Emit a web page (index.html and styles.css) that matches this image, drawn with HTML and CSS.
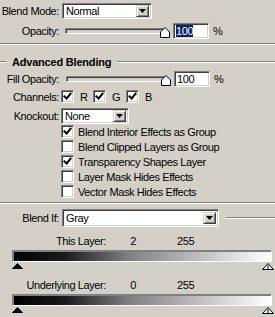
FILE: index.html
```html
<!DOCTYPE html>
<html lang="en">
<head>
    <meta charset="UTF-8">
    <title>Blending Options</title>
    <link rel="stylesheet" href="styles.css">
</head>
<body>

<div class="panel">
    <div class="row row-mode">
        <span class="lbl">Blend Mode:</span>
        <div class="select select-mode">
            <span class="select-text">Normal</span>
            <span class="drop"><svg width="7" height="4" viewBox="0 0 7 4"><polygon points="0,0 7,0 3.5,4" fill="#000"/></svg></span>
        </div>
    </div>

    <div class="row row-opacity">
        <span class="lbl">Opacity:</span>
        <div class="slider">
            <div class="track"></div>
            <svg class="thumb" width="10" height="11" viewBox="0 0 10 11"><polygon points="0.5,10.5 0.5,5 5,0.5 9.5,5 9.5,10.5" fill="#fff" stroke="#000"/></svg>
        </div>
        <div class="field"><span class="selected">100</span></div>
        <span class="unit">%</span>
    </div>

    <div class="sep"></div>

    <div class="group-title"><span>Advanced Blending</span></div>

    <div class="row row-fill">
        <span class="lbl">Fill Opacity:</span>
        <div class="slider">
            <div class="track"></div>
            <svg class="thumb" width="10" height="11" viewBox="0 0 10 11"><polygon points="0.5,10.5 0.5,5 5,0.5 9.5,5 9.5,10.5" fill="#fff" stroke="#000"/></svg>
        </div>
        <div class="field"><span>100</span></div>
        <span class="unit">%</span>
    </div>

    <div class="row row-channels">
        <span class="lbl">Channels:</span>
        <label class="chan chan-r"><span class="box checked"></span>R</label>
        <label class="chan chan-g"><span class="box checked"></span>G</label>
        <label class="chan"><span class="box checked"></span>B</label>
    </div>

    <div class="row row-knockout">
        <span class="lbl">Knockout:</span>
        <div class="select select-knockout">
            <span class="select-text">None</span>
            <span class="drop"><svg width="7" height="4" viewBox="0 0 7 4"><polygon points="0,0 7,0 3.5,4" fill="#000"/></svg></span>
        </div>
    </div>

    <div class="checks">
        <label class="check"><span class="box checked"></span>Blend Interior Effects as Group</label>
        <label class="check"><span class="box"></span>Blend Clipped Layers as Group</label>
        <label class="check"><span class="box checked"></span>Transparency Shapes Layer</label>
        <label class="check"><span class="box"></span>Layer Mask Hides Effects</label>
        <label class="check"><span class="box"></span>Vector Mask Hides Effects</label>
    </div>

    <div class="sep sep-low"></div>

    <div class="row row-blendif">
        <span class="lbl">Blend If:</span>
        <div class="select select-blendif">
            <span class="select-text">Gray</span>
            <span class="drop"><svg width="7" height="4" viewBox="0 0 7 4"><polygon points="0,0 7,0 3.5,4" fill="#000"/></svg></span>
        </div>
        <div class="tail-line"></div>
    </div>

    <div class="range">
        <div class="range-head">
            <span class="range-lbl">This Layer:</span>
            <span class="range-lo">2</span>
            <span class="range-hi">255</span>
        </div>
        <div class="ramp"></div>
        <div class="marks">
            <svg width="11" height="6" viewBox="0 0 11 6"><polygon points="0.5,5.5 5.5,0.5 10.5,5.5" fill="#000" stroke="#000"/></svg>
            <svg width="12" height="7" viewBox="0 0 12 7"><polygon points="0.5,6.5 6,0.5 11.5,6.5" fill="#fff" stroke="#000"/><line x1="6" y1="2" x2="6" y2="6" stroke="#000"/></svg>
        </div>
    </div>

    <div class="range range-under">
        <div class="range-head">
            <span class="range-lbl">Underlying Layer:</span>
            <span class="range-lo">0</span>
            <span class="range-hi">255</span>
        </div>
        <div class="ramp"></div>
        <div class="marks">
            <svg width="11" height="6" viewBox="0 0 11 6"><polygon points="0.5,5.5 5.5,0.5 10.5,5.5" fill="#000" stroke="#000"/></svg>
            <svg width="12" height="7" viewBox="0 0 12 7"><polygon points="0.5,6.5 6,0.5 11.5,6.5" fill="#fff" stroke="#000"/><line x1="6" y1="2" x2="6" y2="6" stroke="#000"/></svg>
        </div>
    </div>
</div>

</body>
</html>
```

FILE: styles.css
```css
body {
    margin: 0;
    padding: 0;
    background-color: #d4d0c8;
    font-family: 'Liberation Sans', Arial, sans-serif;
    font-size: 11px;
    letter-spacing: -0.4px;
    color: #000;
    width: 275px;
    height: 317px;
    overflow: hidden;
}

.panel {
    padding-top: 3px;
}

.row {
    display: flex;
    align-items: center;
}

.lbl {
    width: 59px;
    margin-right: 3px;
    text-align: right;
    white-space: nowrap;
}

/* sunken classic border */
.select,
.field,
.box,
.track {
    box-sizing: border-box;
    background-color: #fff;
    border: 1px solid;
    border-color: #808080 #fff #fff #808080;
    box-shadow: inset 1px 1px 0 #404040, inset -1px -1px 0 #d4d0c8;
}

.select {
    display: flex;
    align-items: center;
    justify-content: space-between;
    height: 16px;
    padding: 2px 2px 2px 3px;
}

.select-text {
    line-height: 12px;
}

.drop {
    box-sizing: border-box;
    width: 13px;
    height: 12px;
    background-color: #d4d0c8;
    border: 1px solid;
    border-color: #d4d0c8 #404040 #404040 #d4d0c8;
    box-shadow: inset 1px 1px 0 #fff, inset -1px -1px 0 #808080;
    display: flex;
    align-items: center;
    justify-content: center;
}

.row-mode {
    height: 16px;
}

.select-mode {
    width: 90px;
}

.row-opacity {
    margin-top: 4px;
    height: 16px;
}

.slider {
    position: relative;
    width: 105px;
    height: 16px;
    margin-left: 3px;
}

.track {
    position: absolute;
    left: 0;
    top: 5px;
    width: 100px;
    height: 6px;
    background-color: #d4d0c8;
}

.thumb {
    position: absolute;
    left: 95px;
    top: 4px;
}

.field {
    width: 36px;
    height: 16px;
    margin-left: 3px;
    padding: 1px 2px;
    line-height: 12px;
}

.selected {
    background-color: #0a246a;
    color: #fff;
}

.unit {
    margin-left: 4px;
}

.sep {
    margin-top: 4px;
    border-top: 1px solid #808080;
    border-bottom: 1px solid #fff;
}

.group-title {
    display: flex;
    align-items: center;
    margin-top: 10px;
    height: 14px;
    font-weight: bold;
    font-size: 11px;
    letter-spacing: -0.2px;
}

.group-title::before,
.group-title::after {
    content: "";
    height: 0;
    border-top: 1px solid #808080;
    border-bottom: 1px solid #fff;
}

.group-title::before {
    width: 6px;
    margin-right: 6px;
}

.group-title::after {
    flex: 1;
    margin-left: 6px;
}

.row-fill {
    margin-top: 2px;
    height: 16px;
}

.row-fill .slider {
    margin-left: 4px;
}

.row-channels {
    margin-top: 3px;
    height: 13px;
}

.chan {
    display: flex;
    align-items: center;
    gap: 6px;
}

.chan-r {
    width: 32px;
}

.chan-g {
    width: 33px;
}

.lbl + .chan {
    margin-left: -1px;
}

.box {
    position: relative;
    display: inline-block;
    width: 13px;
    height: 13px;
    flex-shrink: 0;
}

.box.checked::after {
    content: "";
    position: absolute;
    left: 2px;
    top: 0px;
    width: 3px;
    height: 6px;
    border: solid #000;
    border-width: 0 2px 2px 0;
    transform: translate(1px, 0) rotate(40deg);
}

.row-knockout {
    margin-top: 5px;
    height: 16px;
}

.row-knockout .select {
    margin-left: -1px;
}

.select-knockout {
    width: 68px;
}

.checks {
    display: flex;
    flex-direction: column;
    gap: 2px;
    margin-top: 1px;
    margin-left: 61px;
}

.check {
    display: flex;
    align-items: center;
    gap: 4px;
    height: 13px;
    white-space: nowrap;
}

.sep-low {
    margin-top: 4px;
}

.row-blendif {
    margin-top: 5px;
    height: 18px;
}

.select-blendif {
    width: 157px;
    height: 18px;
    padding: 3px 2px 3px 3px;
}

.tail-line {
    flex: 1;
    margin-left: 7px;
    border-top: 1px solid #808080;
    border-bottom: 1px solid #fff;
}

.range {
    margin-top: 7px;
    padding: 0 3px 0 12px;
}

.range-under {
    margin-top: 7px;
}

.range-head {
    display: flex;
    height: 14px;
    line-height: 14px;
}

.range-lbl {
    width: 94px;
    text-align: right;
}

.range-lo {
    width: 30px;
    text-align: right;
}

.range-hi {
    margin-left: 41px;
}

.ramp {
    margin-top: 2px;
    height: 12px;
    box-sizing: border-box;
    border: 1px solid;
    border-color: #808080 #fff #fff #808080;
    box-shadow: inset 1px 1px 0 #808080;
    background: linear-gradient(to right, #000 0%, #1a1a1a 20%, #808080 45%, #fff 100%);
}

.marks {
    display: flex;
    justify-content: space-between;
    align-items: flex-start;
    height: 8px;
    margin-top: 1px;
    margin-right: -2px;
}
```
